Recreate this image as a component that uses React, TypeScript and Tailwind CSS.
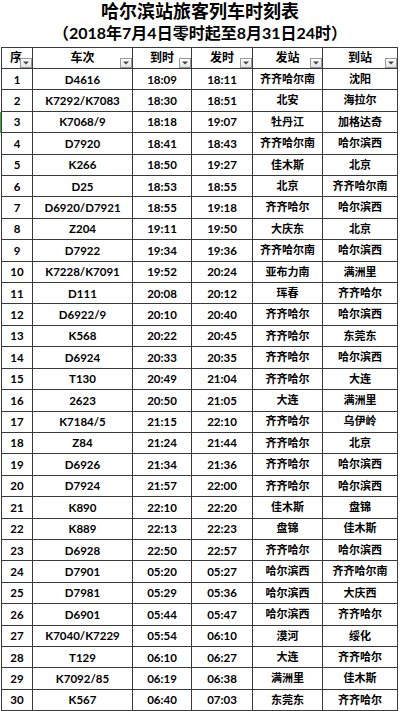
import React from 'react';

interface Train {
    no: number;
    code: string;
    arrive: string;
    depart: string;
    from: string;
    to: string;
}

const trains: Train[] = [
    { no: 1, code: 'D4616', arrive: '18:09', depart: '18:11', from: '齐齐哈尔南', to: '沈阳' },
    { no: 2, code: 'K7292/K7083', arrive: '18:30', depart: '18:51', from: '北安', to: '海拉尔' },
    { no: 3, code: 'K7068/9', arrive: '18:18', depart: '19:07', from: '牡丹江', to: '加格达奇' },
    { no: 4, code: 'D7920', arrive: '18:41', depart: '18:43', from: '齐齐哈尔南', to: '哈尔滨西' },
    { no: 5, code: 'K266', arrive: '18:50', depart: '19:27', from: '佳木斯', to: '北京' },
    { no: 6, code: 'D25', arrive: '18:53', depart: '18:55', from: '北京', to: '齐齐哈尔南' },
    { no: 7, code: 'D6920/D7921', arrive: '18:55', depart: '19:18', from: '齐齐哈尔', to: '哈尔滨西' },
    { no: 8, code: 'Z204', arrive: '19:11', depart: '19:50', from: '大庆东', to: '北京' },
    { no: 9, code: 'D7922', arrive: '19:34', depart: '19:36', from: '齐齐哈尔南', to: '哈尔滨西' },
    { no: 10, code: 'K7228/K7091', arrive: '19:52', depart: '20:24', from: '亚布力南', to: '满洲里' },
    { no: 11, code: 'D111', arrive: '20:08', depart: '20:12', from: '珲春', to: '齐齐哈尔' },
    { no: 12, code: 'D6922/9', arrive: '20:10', depart: '20:40', from: '齐齐哈尔', to: '哈尔滨西' },
    { no: 13, code: 'K568', arrive: '20:22', depart: '20:45', from: '齐齐哈尔', to: '东莞东' },
    { no: 14, code: 'D6924', arrive: '20:33', depart: '20:35', from: '齐齐哈尔', to: '哈尔滨西' },
    { no: 15, code: 'T130', arrive: '20:49', depart: '21:04', from: '齐齐哈尔', to: '大连' },
    { no: 16, code: '2623', arrive: '20:50', depart: '21:05', from: '大连', to: '满洲里' },
    { no: 17, code: 'K7184/5', arrive: '21:15', depart: '22:10', from: '齐齐哈尔', to: '乌伊岭' },
    { no: 18, code: 'Z84', arrive: '21:24', depart: '21:44', from: '齐齐哈尔', to: '北京' },
    { no: 19, code: 'D6926', arrive: '21:34', depart: '21:36', from: '齐齐哈尔', to: '哈尔滨西' },
    { no: 20, code: 'D7924', arrive: '21:57', depart: '22:00', from: '齐齐哈尔', to: '哈尔滨西' },
    { no: 21, code: 'K890', arrive: '22:10', depart: '22:20', from: '佳木斯', to: '盘锦' },
    { no: 22, code: 'K889', arrive: '22:13', depart: '22:23', from: '盘锦', to: '佳木斯' },
    { no: 23, code: 'D6928', arrive: '22:50', depart: '22:57', from: '齐齐哈尔', to: '哈尔滨西' },
    { no: 24, code: 'D7901', arrive: '05:20', depart: '05:27', from: '哈尔滨西', to: '齐齐哈尔南' },
    { no: 25, code: 'D7981', arrive: '05:29', depart: '05:36', from: '哈尔滨西', to: '大庆西' },
    { no: 26, code: 'D6901', arrive: '05:44', depart: '05:47', from: '哈尔滨西', to: '齐齐哈尔' },
    { no: 27, code: 'K7040/K7229', arrive: '05:54', depart: '06:10', from: '漠河', to: '绥化' },
    { no: 28, code: 'T129', arrive: '06:10', depart: '06:27', from: '大连', to: '齐齐哈尔' },
    { no: 29, code: 'K7092/85', arrive: '06:19', depart: '06:38', from: '满洲里', to: '佳木斯' },
    { no: 30, code: 'K567', arrive: '06:40', depart: '07:03', from: '东莞东', to: '齐齐哈尔' },
];

const widths = ['w-[31px]', 'w-[100px]', 'w-[59px]', 'w-[61px]', 'w-[70px]', 'w-[75px]'];

function FilterButton() {
    return (
        <span className="absolute right-0 bottom-0 flex h-[10px] w-[12px] items-center justify-center border border-[#9a9a9a] bg-gradient-to-b from-white to-[#e4e4e4]">
            <svg width="6" height="4" viewBox="0 0 6 4">
                <path d="M0 0.5h6L3 3.5z" fill="#444" />
            </svg>
        </span>
    );
}

export default function App() {
    const headers = ['序', '车次', '到时', '发时', '发站', '到站'];

    return (
        <div
            className="h-[711px] w-[400px] overflow-hidden bg-white text-black"
            style={{ fontFamily: 'Lato, "Noto Sans CJK SC", sans-serif' }}
        >
            {/* Title */}
            <div className="flex h-[47px] flex-col items-center pt-[1px] leading-[21px] font-bold">
                <div className="text-[18px]">哈尔滨站旅客列车时刻表</div>
                <div className="text-[16px]">（2018年7月4日零时起至8月31日24时）</div>
            </div>

            {/* Header row */}
            <div className="flex">
                <div className="w-[1px]" />
                <div className="flex h-[22px] border-t border-l border-[#3a3a3a]">
                    {headers.map((h, i) => (
                        <div
                            key={h}
                            className={`relative flex items-center border-r border-b border-[#3a3a3a] text-[12px] font-bold ${widths[i]} ${i === 0 ? 'justify-start pl-[8px]' : 'justify-center'}`}
                        >
                            {h}
                            <FilterButton />
                        </div>
                    ))}
                </div>
            </div>

            {/* Rows */}
            {trains.map((t) => {
                const cells = [String(t.no), t.code, t.arrive, t.depart, t.from, t.to];
                return (
                    <div key={t.no} className="flex h-[21.41px]">
                        <div className={`w-[1px] ${t.no === 3 ? 'bg-[#3cb043]' : ''}`} />
                        <div className="flex border-l border-[#3a3a3a]">
                            {cells.map((c, i) => (
                                <div
                                    key={i}
                                    className={`flex items-center justify-center border-r border-b border-[#3a3a3a] ${widths[i]} ${i < 4 ? 'text-[11.5px]' : 'text-[11px]'} font-bold`}
                                >
                                    {c}
                                </div>
                            ))}
                        </div>
                    </div>
                );
            })}
        </div>
    );
}
